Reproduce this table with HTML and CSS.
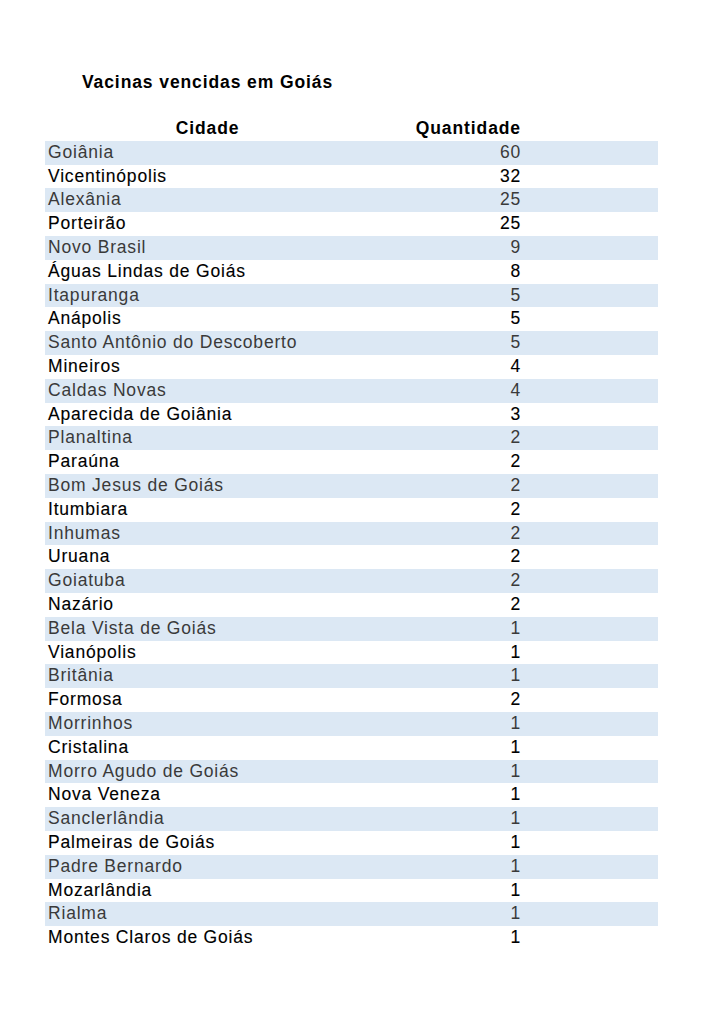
FILE: index.html
```html
<!DOCTYPE html>
<html lang="pt-BR">
<head>
<meta charset="utf-8">
<title>Vacinas vencidas em Goiás</title>
<link rel="stylesheet" href="styles.css">
</head>
<body>
<div class="page">
  <h1 class="title">Vacinas vencidas em Goiás</h1>
  <table class="data">
    <thead>
      <tr><th class="c-city">Cidade</th><th class="c-qty">Quantidade</th><th class="c-pad"></th></tr>
    </thead>
    <tbody>
      <tr><td>Goiânia</td><td class="num">60</td><td></td></tr>
      <tr><td>Vicentinópolis</td><td class="num">32</td><td></td></tr>
      <tr><td>Alexânia</td><td class="num">25</td><td></td></tr>
      <tr><td>Porteirão</td><td class="num">25</td><td></td></tr>
      <tr><td>Novo Brasil</td><td class="num">9</td><td></td></tr>
      <tr><td>Águas Lindas de Goiás</td><td class="num">8</td><td></td></tr>
      <tr><td>Itapuranga</td><td class="num">5</td><td></td></tr>
      <tr><td>Anápolis</td><td class="num">5</td><td></td></tr>
      <tr><td>Santo Antônio do Descoberto</td><td class="num">5</td><td></td></tr>
      <tr><td>Mineiros</td><td class="num">4</td><td></td></tr>
      <tr><td>Caldas Novas</td><td class="num">4</td><td></td></tr>
      <tr><td>Aparecida de Goiânia</td><td class="num">3</td><td></td></tr>
      <tr><td>Planaltina</td><td class="num">2</td><td></td></tr>
      <tr><td>Paraúna</td><td class="num">2</td><td></td></tr>
      <tr><td>Bom Jesus de Goiás</td><td class="num">2</td><td></td></tr>
      <tr><td>Itumbiara</td><td class="num">2</td><td></td></tr>
      <tr><td>Inhumas</td><td class="num">2</td><td></td></tr>
      <tr><td>Uruana</td><td class="num">2</td><td></td></tr>
      <tr><td>Goiatuba</td><td class="num">2</td><td></td></tr>
      <tr><td>Nazário</td><td class="num">2</td><td></td></tr>
      <tr><td>Bela Vista de Goiás</td><td class="num">1</td><td></td></tr>
      <tr><td>Vianópolis</td><td class="num">1</td><td></td></tr>
      <tr><td>Britânia</td><td class="num">1</td><td></td></tr>
      <tr><td>Formosa</td><td class="num">2</td><td></td></tr>
      <tr><td>Morrinhos</td><td class="num">1</td><td></td></tr>
      <tr><td>Cristalina</td><td class="num">1</td><td></td></tr>
      <tr><td>Morro Agudo de Goiás</td><td class="num">1</td><td></td></tr>
      <tr><td>Nova Veneza</td><td class="num">1</td><td></td></tr>
      <tr><td>Sanclerlândia</td><td class="num">1</td><td></td></tr>
      <tr><td>Palmeiras de Goiás</td><td class="num">1</td><td></td></tr>
      <tr><td>Padre Bernardo</td><td class="num">1</td><td></td></tr>
      <tr><td>Mozarlândia</td><td class="num">1</td><td></td></tr>
      <tr><td>Rialma</td><td class="num">1</td><td></td></tr>
      <tr><td>Montes Claros de Goiás</td><td class="num">1</td><td></td></tr>
    </tbody>
  </table>
</div>
</body>
</html>
```
FILE: styles.css
```css
html, body {
  margin: 0;
  padding: 0;
  background: #ffffff;
}

body {
  font-family: "Liberation Sans", Arial, Helvetica, sans-serif;
  color: #000;
}

.page {
  padding: 72px 0 0 0;
}

.title {
  margin: 0 0 25px 0;
  padding-left: 82px;
  font-size: 17.5px;
  line-height: 20px;
  font-weight: bold;
  letter-spacing: 0.9px;
  color: #000;
}

.data {
  margin-left: 45px;
  width: 613px;
  border-collapse: collapse;
  border-spacing: 0;
  table-layout: fixed;
  font-size: 17.5px;
  letter-spacing: 0.8px;
}

.data th,
.data td {
  padding: 0;
  height: 23.8px;
  line-height: 23.8px;
  white-space: nowrap;
  overflow: visible;
}

.data th {
  font-weight: bold;
  letter-spacing: 0.9px;
  color: #000;
}

.c-city {
  width: 325px;
  text-align: center;
}

.c-qty {
  width: 151px;
  text-align: right;
}

.c-pad {
  width: auto;
}

.data td {
  padding-left: 3px;
  color: #000;
  -webkit-text-stroke: 0.12px #000;
}

.data td.num {
  text-align: right;
  padding-left: 0;
  padding-right: 0;
}

.data tbody tr:nth-child(odd) {
  background: #dce8f4;
}

.data tbody tr:nth-child(odd) td {
  color: #3a3a3a;
  -webkit-text-stroke: 0;
}
```
